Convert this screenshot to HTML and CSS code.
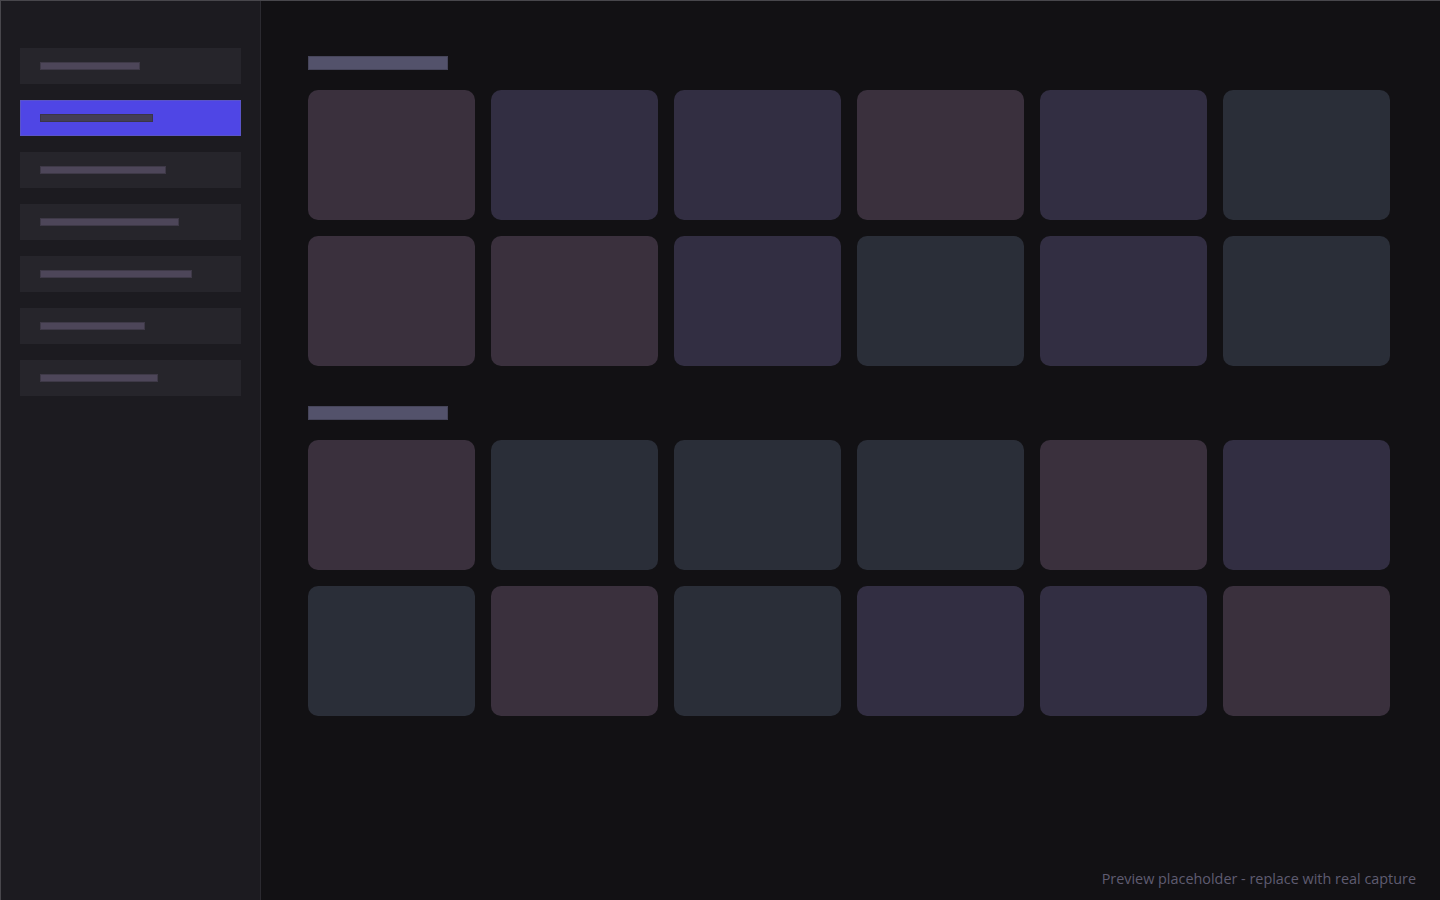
FILE: index.html
```html
<!DOCTYPE html>
<html lang="en">
<head>
  <meta charset="UTF-8" />
  <meta name="viewport" content="width=device-width, initial-scale=1" />
  <title>Preview</title>
  <link rel="stylesheet" href="styles.css">
</head>
<body>
  <div class="app">
    <aside class="sidebar">
      <div class="nav-item"><span class="nav-label w100"></span></div>
      <div class="nav-item active"><span class="nav-label w113"></span></div>
      <div class="nav-item"><span class="nav-label w126"></span></div>
      <div class="nav-item"><span class="nav-label w139"></span></div>
      <div class="nav-item"><span class="nav-label w152"></span></div>
      <div class="nav-item"><span class="nav-label w105"></span></div>
      <div class="nav-item"><span class="nav-label w118"></span></div>
    </aside>

    <main class="main">
      <section class="section">
        <div class="section-title"></div>
        <div class="grid">
          <div class="tile rose"></div>
          <div class="tile violet"></div>
          <div class="tile violet"></div>
          <div class="tile rose"></div>
          <div class="tile violet"></div>
          <div class="tile slate"></div>
          <div class="tile rose"></div>
          <div class="tile rose"></div>
          <div class="tile violet"></div>
          <div class="tile slate"></div>
          <div class="tile violet"></div>
          <div class="tile slate"></div>
        </div>
      </section>

      <section class="section">
        <div class="section-title"></div>
        <div class="grid">
          <div class="tile rose"></div>
          <div class="tile slate"></div>
          <div class="tile slate"></div>
          <div class="tile slate"></div>
          <div class="tile rose"></div>
          <div class="tile violet"></div>
          <div class="tile slate"></div>
          <div class="tile rose"></div>
          <div class="tile slate"></div>
          <div class="tile violet"></div>
          <div class="tile violet"></div>
          <div class="tile rose"></div>
        </div>
      </section>

      <p class="caption">Preview placeholder - replace with real capture</p>
    </main>
  </div>
</body>
</html>
```

FILE: styles.css
```css
* {
  box-sizing: border-box;
}

body {
  margin: 0;
  background-color: #121114;
  font-family: 'Open Sans', 'Noto Sans', sans-serif;
}

.app {
  display: flex;
  height: 900px;
  border-top: 1px solid #48474c;
  border-left: 1px solid #48474c;
  overflow: hidden;
}

/* Sidebar */
.sidebar {
  width: 260px;
  flex-shrink: 0;
  background-color: #1c1b20;
  border-right: 1px solid #2b2a30;
  padding: 47px 19px 0 19px;
  display: flex;
  flex-direction: column;
  gap: 16px;
}

.nav-item {
  height: 36px;
  background-color: #26252b;
  padding: 0 20px;
  display: flex;
  align-items: center;
}

.nav-item.active {
  background-color: #4f46e5;
  border: 1px solid #5a54c8;
  padding: 0 19px;
}

.nav-label {
  display: block;
  height: 8px;
  background-color: #4d4659;
  border: 1px solid #3e3947;
}

.nav-item.active .nav-label {
  background-color: #433e55;
  border-color: #3a3548;
}

.w100 { width: 100px; }
.w105 { width: 105px; }
.w113 { width: 113px; }
.w118 { width: 118px; }
.w126 { width: 126px; }
.w139 { width: 139px; }
.w152 { width: 152px; }

/* Main */
.main {
  flex: 1;
  position: relative;
  padding: 55px 49px 0 47px;
  display: flex;
  flex-direction: column;
  gap: 40px;
}

.section-title {
  width: 140px;
  height: 14px;
  background-color: #53526b;
  border: 1px solid #46455a;
  margin-bottom: 20px;
}

.grid {
  display: grid;
  grid-template-columns: repeat(6, 167px);
  grid-auto-rows: 130px;
  gap: 16px;
}

.tile {
  border-radius: 10px;
}

.rose {
  background-color: #3a303d;
}

.violet {
  background-color: #322e42;
}

.slate {
  background-color: #2a2e38;
}

.caption {
  position: absolute;
  right: 24px;
  bottom: 12px;
  margin: 0;
  font-size: 14.4px;
  color: #5f5c71;
}
```
